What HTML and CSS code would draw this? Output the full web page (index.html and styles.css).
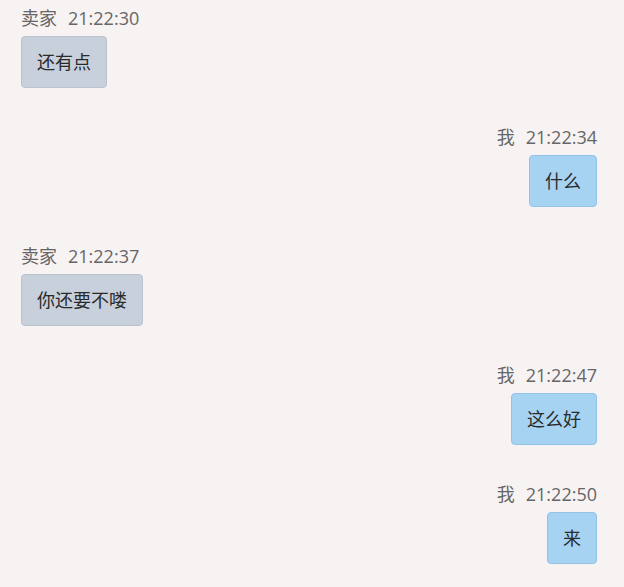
FILE: index.html
```html
<!DOCTYPE html>
<html lang="zh-CN">
<head>
    <meta charset="UTF-8">
    <meta name="viewport" content="width=device-width, initial-scale=1.0">
    <title>聊天记录</title>
    <link rel="stylesheet" href="styles.css">
</head>
<body>
    <div class="chat">
        <div class="msg other">
            <div class="meta"><span class="name">卖家</span><span class="time">21:22:30</span></div>
            <div class="bubble">还有点</div>
        </div>
        <div class="msg mine">
            <div class="meta"><span class="name">我</span><span class="time">21:22:34</span></div>
            <div class="bubble">什么</div>
        </div>
        <div class="msg other">
            <div class="meta"><span class="name">卖家</span><span class="time">21:22:37</span></div>
            <div class="bubble">你还要不喽</div>
        </div>
        <div class="msg mine">
            <div class="meta"><span class="name">我</span><span class="time">21:22:47</span></div>
            <div class="bubble">这么好</div>
        </div>
        <div class="msg mine">
            <div class="meta"><span class="name">我</span><span class="time">21:22:50</span></div>
            <div class="bubble">来</div>
        </div>
    </div>
</body>
</html>
```

FILE: styles.css
```css
body {
    margin: 0;
    background: #f8f3f3;
    font-family: 'Open Sans', 'Noto Sans CJK SC', sans-serif;
    color: #333;
}

.chat {
    display: flex;
    flex-direction: column;
    gap: 39px;
    padding: 8px 27px 0 21px;
}

.msg {
    display: flex;
    flex-direction: column;
    gap: 8px;
}

.msg.other {
    align-items: flex-start;
}

.msg.mine {
    align-items: flex-end;
}

.meta {
    font-size: 18px;
    line-height: 20px;
    color: #666;
}

.meta .time {
    margin-left: 11px;
}

.bubble {
    font-size: 18px;
    line-height: 24px;
    padding: 13px 15px;
    border-radius: 4px;
    color: #2a2a2a;
}

.other .bubble {
    background: #c8d0db;
    border: 1px solid #b9c2ce;
}

.mine .bubble {
    background: #a7d3f3;
    border: 1px solid #93c3e6;
}
```
